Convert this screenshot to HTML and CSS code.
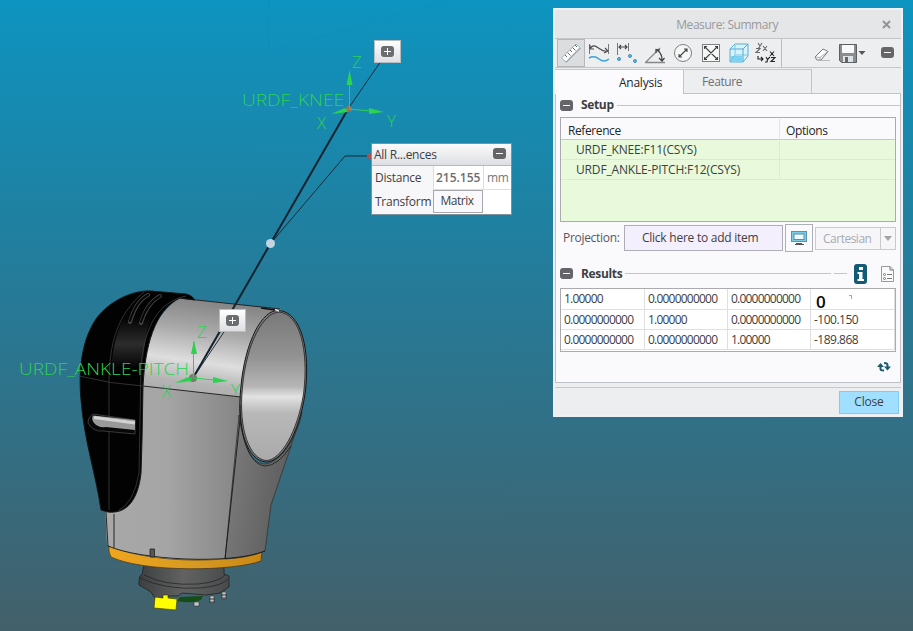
FILE: index.html
```html
<!DOCTYPE html>
<html lang="en">
<head>
<meta charset="utf-8">
<title>Measure: Summary</title>
<link rel="stylesheet" href="styles.css">
</head>
<body>
<main class="viewport">
<svg class="scene" width="913" height="631" viewBox="0 0 913 631">
  <defs>
    <linearGradient id="upper" gradientUnits="userSpaceOnUse" x1="200" y1="300" x2="186" y2="400"><stop offset="0" stop-color="#858585"/><stop offset=".3" stop-color="#a9a9a9"/><stop offset=".61" stop-color="#dedede"/><stop offset=".82" stop-color="#b4b4b4"/><stop offset="1" stop-color="#aaa"/></linearGradient>
    <linearGradient id="lower" x1="0" x2="1" y1="0" y2="0"><stop offset="0" stop-color="#a8a8a8"/><stop offset=".45" stop-color="#a5a5a5"/><stop offset="1" stop-color="#858585"/></linearGradient>
    <linearGradient id="side" x1="0" x2="1" y1="0" y2=".3"><stop offset="0" stop-color="#808080"/><stop offset="1" stop-color="#595959"/></linearGradient>
    <linearGradient id="hole" x1="0" x2="0" y1="0" y2="1"><stop offset="0" stop-color="#797979"/><stop offset=".3" stop-color="#929292"/><stop offset=".5" stop-color="#b5b5b5"/><stop offset=".57" stop-color="#e2e2e2"/><stop offset=".68" stop-color="#b8b8b8"/><stop offset="1" stop-color="#aaa"/></linearGradient>
    <linearGradient id="gold" x1="0" x2="1" y1="0" y2="0"><stop offset="0" stop-color="#f0a51d"/><stop offset=".55" stop-color="#d69a22"/><stop offset="1" stop-color="#ca8714"/></linearGradient>
    <linearGradient id="band" x1="0" x2="0" y1="0" y2="1"><stop offset="0" stop-color="#000"/><stop offset=".3" stop-color="#050505"/><stop offset=".6" stop-color="#2c2c2c"/><stop offset=".9" stop-color="#000"/></linearGradient>
    <linearGradient id="base" x1="0" x2="1" y1="0" y2="0"><stop offset="0" stop-color="#3d3f40"/><stop offset=".5" stop-color="#626262"/><stop offset="1" stop-color="#484a4b"/></linearGradient>
  </defs>
  <path d="M269 0V52M269 52L445 2" stroke="#0d84c0" stroke-width="1" fill="none" opacity=".2"/>

  <!-- mounting base -->
  <path d="M144 565L142 574Q139 576 139 581V585L151 592L156 600L165 596H178L182 593L206 595L220 593L229 587V576L224 574V564Z" fill="url(#base)" stroke="#222" stroke-width=".8"/>
  <path d="M144 575Q165 586 198 584Q220 582 226 574M140 578Q165 590 200 588Q222 586 228 579" stroke="#252627" stroke-width=".8" fill="none"/>
  <path d="M180 597L203 596L201 600Q190 604 177 601Z" fill="#164c16"/>
  <path d="M155 597L163 598V595H168V598L177 599L176 610L154 608Z" fill="#ff0" stroke="#464600" stroke-width=".7"/>
  <g stroke="#333" stroke-width=".6" fill="#c2cacd"><path d="M194 602h5v4h-5zM210 596h4v7h-4zM222 592h4v7h-4z"/></g>
  <path d="M209 599h6M209 602h6M221 595h6M221 598h6" stroke="#333" stroke-width="1"/>

  <!-- shell -->
  <path d="M109 545C140 562 230 566 262 550L261 561C235 571 145 573 111 557Q108 552 109 545Z" fill="url(#gold)" stroke="#463718" stroke-width=".7"/>
  <path d="M140 370L241 391L239 420L225 559C180 562 130 557 107 545L105 505Z" fill="url(#lower)"/>
  <path d="M239 415C244 450 253 465 266 464C284 460 298 434 302 412L290 449L271 505L265 551Q248 558 225 559Z" fill="url(#side)" stroke="#333" stroke-width=".8"/>
  <path d="M180 298L280 309L294 320L260 340L241 397L143 386L146 350Q154 315 180 298Z" fill="url(#upper)"/>
  <path d="M178 298L280 309M143 386L241 397M240 420L225 559M106 512L108 546C140 560 230 565 265 551M114 514V548" stroke="#181818" stroke-width=".9" fill="none"/>
  <path d="M279 310.500C301 312 311 350 305 394C299 434 282 462 266 462C248 461 236 430 241 386C245 342 262 309 279 310.500Z" fill="#777" stroke="#171717"/>
  <path d="M279 312C300 314 309 350 303.500 394C297.500 431 281 460.500 266 460.500C250 459 238 430 242.500 387C246.500 343 263 313 279 312Z" fill="url(#hole)" stroke="#222" stroke-width=".8"/>
  <path d="M240 405C240 436 249 465 265 466Q278 466 291 446" stroke="#1c1c1c" stroke-width=".8" fill="none"/>
  <path d="M261 308L275 310" stroke="#111" stroke-width="1.500"/><path d="M275 309.500l4 1.500" stroke="#ddd" stroke-width="1.500"/>
  <path d="M150 549h4.500v8h-4.500z" fill="#555" stroke="#222" stroke-width=".8"/>

  <!-- cover -->
  <path d="M101 510C96 475 84 440 81 400C77 357 87 330 99 315C114 298 136 290 151 291L186 294Q192 295 195 300L180 298C154 310 145 348 143 386L142 440L141 473C138 500 127 514 108 512Z" fill="#020202" stroke="#171717"/>
  <path d="M144 292L167 293C150 308 144 334 142 379L111 377C112 344 119 314 144 292Z" fill="url(#band)"/>
  <path d="M144 292C117 314 109 345 109 382V510M186 296C158 302 145 326 141 365L139 473Q134 503 118 511M79 376Q110 384 143 386" stroke="#3d3d3d" stroke-width=".8" fill="none"/>
  <path d="M130 322Q136 301 148 295M141 323Q147 303 160 296" stroke="#464646" stroke-width="4" stroke-linecap="round" fill="none"/><path d="M130 321Q136 301 148 295M141 322Q147 303 160 296" stroke="#080808" stroke-width="2.200" stroke-linecap="round" fill="none"/>
  <path d="M135 420L93 414Q88 417 88 423Q93 432 103 431L135 434Z" fill="#080808" stroke="#505050" stroke-width=".7"/>
  <path d="M135 420L93 415.500Q91 419 94 423Q98 428 106 427L135 430Z" fill="#999"/><path d="M94 417.500L135 423" stroke="#d2d2d2" stroke-width="3"/>

  <!-- measurement lines -->
  <g fill="none" stroke="#14222e"><path d="M348 109L193 378" stroke-width="2"/><path d="M348 109L381 61M271 243L345 156H371M193 378L226 329" stroke-width=".9"/></g>
  <circle cx="349" cy="109" r="3" fill="#9a7054"/><circle cx="370" cy="156" r="3" fill="#a45358"/>
  <circle cx="193" cy="378" r="4" fill="#71806a"/><circle cx="270.500" cy="243.500" r="4.500" fill="#c5d4e2"/>
  <g stroke="#2dd250" fill="#2dd250"><path d="M349.500 108V72M349 109L370 111M348 109L336 113M193.500 377V342M193 378L214 380M192 378L180 382"/><path stroke="none" d="M349.500 70L346.500 85H352.500ZM384 112L369 108V114ZM331 114L345 108L348 112ZM194 340L191 354H197ZM228 381L213 377V383ZM175 383L188 377L192 381Z"/></g>
  <g class="axis"><text x="242" y="106" textLength="102" lengthAdjust="spacingAndGlyphs">URDF_KNEE</text><text x="19" y="375" textLength="170" lengthAdjust="spacingAndGlyphs">URDF_ANKLE-PITCH</text><text x="352" y="68">Z</text><text x="317" y="129">X</text><text x="387" y="127">Y</text><text x="197" y="338">Z</text><text x="162" y="397">X</text><text x="231" y="396">Y</text></g>
</svg>

<button class="expander knee"><svg width="13" height="12"><rect width="13" height="11" rx="3" fill="#6b6c70"/><path d="M3 5.500h7M6.500 2v7" stroke="#fff"/></svg></button>
<button class="expander ankle"><svg width="13" height="12"><rect width="13" height="11" rx="3" fill="#6b6c70"/><path d="M3 5.500h7M6.500 2v7" stroke="#fff"/></svg></button>

<section class="callout">
  <header><span class="t-all">All R...ences</span><i class="minus"></i></header>
  <div class="measure"><span>Distance</span><b>215.155</b><em>mm</em></div>
  <div class="measure transform"><span>Transform</span><button>Matrix</button><em></em></div>
</section>

<section class="dialog">
  <header class="title"><span>Measure: Summary</span><svg width="9" height="9"><path d="M1 1L8 8M8 1L1 8" stroke="#939497" stroke-width="2"/></svg></header>
  <nav class="toolbar">
    <span class="tool active"><svg width="28" height="28"><path d="M4.500 19L19 5L23 8.500L9 23Z" fill="#fff" stroke="#a3b1b9"/><path d="M8 16l2 2M10.500 13.500l3 3M13 11l2 2M15.500 8.500l3 3M18 6l2 2" stroke="#547184"/><path d="M9 23.500L23.500 9" stroke="#7f8d95"/></svg></span>
    <span class="tool"><svg width="28" height="28"><path d="M4.500 5v10M23.500 5v10" stroke="#777"/><path d="M5 10C8 4 12 8 15 10Q19 13 23 12M5 10V6M5 10H9M23 12L20 9M23 12L19 14" fill="none" stroke="#4c4c4c" stroke-width="1.100"/><path d="M4 19Q9 16 14 20T24 20" fill="none" stroke="#3aa4da" stroke-width="1.600"/></svg></span>
    <span class="tool"><svg width="28" height="28"><path d="M4.500 4v12M15.500 4v8" stroke="#777"/><path d="M6 8h8M8 6L6 8L8 10M12 6L14 8L12 10" fill="none" stroke="#444" stroke-width="1.100"/><g fill="#64bce6" stroke="#3b90be"><circle cx="6" cy="20" r="1.500"/><circle cx="17" cy="17" r="1.500"/><circle cx="22" cy="22" r="1.500"/></g></svg></span>
    <span class="tool"><svg width="28" height="28"><path d="M4 23.500H24M5 23L19 9" stroke="#888" stroke-width="1.300"/><path d="M16 11Q21 14 21 21M15 14V10.500L19 11M18 19L21 22L23.500 19" fill="none" stroke="#444" stroke-width="1.200"/></svg></span>
    <span class="tool"><svg width="28" height="28"><circle cx="14" cy="14" r="8.500" fill="#f6f7f7" stroke="#808080"/><path d="M10 18L18 10M10 15v3h3M15 10h3v3" fill="none" stroke="#444" stroke-width="1.100"/></svg></span>
    <span class="tool"><svg width="28" height="28"><rect x="5.500" y="5.500" width="17" height="17" fill="#f6f7f7" stroke="#808080"/><path d="M7.500 7.500L20.500 20.500M20.500 7.500L7.500 20.500M7.500 10V7.500H10M18 7.500h2.500V10M7.500 18v2.500H10M18 20.500h2.500V18" fill="none" stroke="#444" stroke-width="1.100"/></svg></span>
    <span class="tool"><svg width="28" height="28"><path d="M5 10L10 5H23V17L18 23H5Z" fill="#d6f3ff" stroke="#5cadd0"/><path d="M5 10H18L23 5M18 10V23" fill="none" stroke="#55a9ce"/><path d="M5.500 17H17.500V22.500H5.500Z" fill="#7cd2f2"/><path d="M10 6V16H23M10 16L5 22" fill="none" stroke="#70b7d5" stroke-width=".8"/></svg></span>
    <span class="tool axes"><svg width="28" height="28"><g fill="none" stroke="#66686b" stroke-width="1.100"><path d="M5 4L7 7L9 4M7 7L6 9H5M3 9.500H7L3 13.500H7M10 7L14 12M14 7L10 12"/><path stroke="#222" d="M17 12.500L21 17M21 12.500L17 17M5 17V20H10M8 18L10 20L8 22M13 18L14.500 20.500L17 18M14.500 21L14 23H12M18 18.500H22L18 22.500H22"/></g></svg></span>
    <span class="divider"></span>
    <span class="tool eraser"><svg width="28" height="28"><path d="M7 18L15 10L20 12.500L13 21H9Z" fill="#fff" stroke="#77787b"/><path d="M7 18L12 18.500L20 12.500M12 18.500V21" fill="none" stroke="#999" stroke-width=".8"/><path d="M13 21.500H22" stroke="#bbb"/></svg></span>
    <span class="tool save"><svg width="28" height="28"><path d="M.500 5.500h17v18H2.500L.500 21.500Z" fill="#8a8d90" stroke="#5d6063"/><path d="M3 6h12v8H3Z" fill="#f7f8f8"/><path d="M4 17h10v6H4Z" fill="#dce4e8"/><path d="M6 18h3v5H6Z" fill="#666"/><path d="M19.500 12h7l-3.500 4Z" fill="#555"/></svg></span>
    <i class="minus"></i>
  </nav>
  <div class="tabs"><span class="selected">Analysis</span><span class="feature">Feature</span><i></i></div>
  <div class="panel">
    <h2 class="setup"><i class="minus"></i><span>Setup</span><hr><hr class="tail"></h2>
    <div class="references">
      <div class="row head"><span>Reference</span><span>Options</span></div>
      <div class="row"><span class="ref1">URDF_KNEE:F11(CSYS)</span><span></span></div>
      <div class="row"><span class="ref2">URDF_ANKLE-PITCH:F12(CSYS)</span><span></span></div>
    </div>
    <div class="projection"><label>Projection:</label><div class="collector"><span>Click here to add item</span></div><button class="screen"><svg width="18" height="16"><rect x="1.500" y="1.500" width="15" height="10" fill="#7bcbe6" stroke="#5495af"/><rect x="4" y="4" width="10" height="5.500" fill="#f2fbff" stroke="#4b94ad"/><path d="M6 13h6v1h2v1H5v-1h1Z" fill="#4e5860"/></svg></button><div class="select"><span>Cartesian</span><i></i></div></div>
    <h2 class="results"><i class="minus"></i><span>Results</span><hr><hr class="short"><b class="info"><svg width="13" height="20"><rect width="13" height="20" rx="3" fill="#135a74"/><path d="M5 3h4v3H5ZM3.500 8H8.500V15H10V17H3.500V15H5V10H3.500Z" fill="#fff"/></svg></b><svg class="report" width="13" height="16"><path d="M.5.500H9L12.500 4V15.500H.5Z" fill="#fafafa" stroke="#999"/><path d="M9 .5V4h3.500M6 8.500h5M6 12.500h5" fill="none" stroke="#777"/><circle cx="3.500" cy="8.500" r="1" fill="none" stroke="#777"/><circle cx="3.500" cy="12.500" r="1" fill="none" stroke="#777"/></svg></h2>
    <div class="matrix">
      <span>1.00000</span><span>0.0000000000</span><span>0.0000000000</span><span class="zero"><b>0</b><i></i></span>
      <span>0.0000000000</span><span>1.00000</span><span>0.0000000000</span><span>-100.150</span>
      <span>0.0000000000</span><span>0.0000000000</span><span>1.00000</span><span>-189.868</span>
    </div>
    <div class="refresh"><svg width="14" height="12"><path d="M3.500 4V8Q3.500 9.500 7 9.500M10.500 7V4Q10.500 2 7 2" fill="none" stroke="#1c5870" stroke-width="2"/><path d="M0 6L3.500 2L7 6ZM7 5.500H14L10.500 9.500Z" fill="#1c5870"/></svg></div>
  </div>
  <footer><button>Close</button></footer>
</section>
</main>
</body>
</html>
```
FILE: styles.css
```css
* { box-sizing: border-box; }
body { margin: 0; font: 12px/20px "Open Sans", "Noto Sans", sans-serif; color: #3e3e42; letter-spacing: -.25px; }
button { font: inherit; letter-spacing: inherit; color: inherit; padding: 0; }
svg { display: block; flex: none; }
span { white-space: nowrap; }
.viewport { position: relative; width: 913px; height: 631px; overflow: hidden; background: linear-gradient(#0d94c0, #247c9a 43%, #43606a); }
.scene { position: absolute; inset: 0; }
.axis { font: 300 17px "Open Sans", sans-serif; fill: #2dd250; letter-spacing: 0; }
.minus { display: block; flex: none; width: 13px; height: 11px; border-radius: 3px; background: linear-gradient(#fff, #fff) center / 7px 1px no-repeat #656569; }

.expander { position: absolute; width: 27px; height: 23px; border: 1px solid #b7bcc0; background: linear-gradient(#fff, #dedfe3); display: grid; place-items: center; }
.knee { left: 374px; top: 40px; }
.ankle { left: 219px; top: 309px; }
.callout { position: absolute; left: 371px; top: 143px; width: 141px; height: 72px; border: 1px solid #7e929b; background: #fff; }
.callout header { height: 22px; display: flex; justify-content: space-between; padding: 1px 5px 0 2px; background: linear-gradient(#fbfbfb, #dedfe3); border-bottom: 1px solid #b6b8bb; }
.callout .minus { margin-top: 3px; }
.measure { display: grid; grid-template-columns: 61px 51px 1fr; height: 24px; line-height: 24px; border-bottom: 1px solid #dedee2; }
.measure > span { padding-left: 3px; background: #f7f7fa; }
.measure b { border: solid #dedee2; border-width: 0 1px; padding-left: 2px; font-weight: 600; color: #6c6c70; letter-spacing: 0; }
.measure em { font-style: normal; padding-left: 3px; color: #77777b; }
.transform { border: 0; }
.transform button { height: 23px; width: 50px; border: 1px solid #a8a8ac; background: #f9f9fb; line-height: 20px; padding: 0 2px 1px 0; letter-spacing: -.5px; }

.dialog { position: absolute; left: 553px; top: 8px; width: 350px; height: 409px; border: 2px solid #eef2f6; background: #eceef0; display: flex; flex-direction: column; }
.title { height: 29px; display: flex; align-items: center; justify-content: flex-end; gap: 104px; padding: 0 10px 0 0; background: #e5e6e8; border-bottom: 1px solid #c4c5c9; color: #99999d; }
.title span { letter-spacing: -.45px; padding-top: 1px; }
.toolbar { height: 29px; display: flex; padding-left: 2px; border-bottom: 1px solid #c5c6ca; }
.tool { flex: 0 0 28px; height: 28px; }
.active { background: #dcdddf; border: 1px solid #b5b7ba; }
.active svg { margin: -1px; }
.divider { border-left: 1px solid #bbbcbf; }
.eraser { margin-left: 26px; }
.save { margin-left: 3px; }
.toolbar .minus { margin: 8px 0 0 14px; }
.tabs { height: 25px; display: flex; margin-top: 1px; line-height: 25px; }
.tabs span { border-top: 1px solid #c6c8cb; }
.selected { width: 128px; padding-left: 64px; background: #fbfbfd; color: #252529; }
.feature { width: 129px; padding-left: 18px; border: 1px solid #c3c4c8; color: #707074; letter-spacing: -.4px; }
.tabs .feature { line-height: 23px; }
.tabs i { flex: 1; border-bottom: 1px solid #c3c4c8; }
.panel { height: 289px; border: 1px solid #bfc2c7; border-top: 0; background: #fafafc; padding: 0 4px; }
h2 { display: flex; align-items: center; height: 23px; margin: 0; font-size: 12px; font-weight: 700; letter-spacing: -.35px; }
.setup { padding-bottom: 1px; }
h2 span { margin-left: 8px; }
hr { border: 0; height: 1px; background: #c4c5c9; flex: 1; margin: 0 0 0 3px; }
.setup .tail { flex: 0 0 57px; margin: 1px -4px 0 0; }
.references { height: 105px; border: 1px solid #aaabaf; background: #e8fadb; }
.row { display: grid; grid-template-columns: 218px 1fr; height: 20px; border-bottom: 1px solid #d8eadb; letter-spacing: -.16px; }
.row.head { height: 22px; padding-top: 1px; line-height: 23px; background: #fafafc; border-color: #c4c7cd; color: #252529; letter-spacing: -.4px; }
.row > span { padding-left: 15px; }
.head > span { padding-left: 7px; }
.row > span + span { padding-left: 6px; border-left: 1px solid #dce8e0; }
.projection { display: flex; align-items: center; height: 30px; margin-top: 1px; }
.projection label { width: 64px; padding-left: 3px; color: #59565f; letter-spacing: -.3px; }
.collector { width: 159px; height: 26px; border: 1px solid #aeaeb4; background: #f4effd; line-height: 24px; padding-left: 17px; }
.screen { width: 28px; height: 28px; margin-left: 2px; border: 1px solid #aeafb5; background: #fafafc; display: grid; place-items: center; }
.select { display: flex; width: 81px; height: 23px; margin-left: 2px; border: 1px solid #cacace; background: #f6f6f9; color: #aaaab0; line-height: 21px; letter-spacing: -.5px; }
.select span { flex: 1; padding-left: 7px; border-right: 1px solid #cacace; }
.select i { margin: 8px 3px; border: 4px solid transparent; border-top: 5px solid #a4a5a9; border-bottom: 0; width: 8px; height: 5px; }
.results { height: 35px; padding-top: 6px; }
.results .short { flex: 0 0 13px; }
.info { margin-left: 7px; }
.report { margin: 0 2px 0 14px; }
.matrix { height: 64px; border: 1px solid #aaaab0; background: #fff; display: grid; grid-template-columns: 84px 83px 83px 1fr; grid-template-rows: 21px 20px 20px; line-height: 20px; letter-spacing: -.78px; }
.matrix > span { padding-left: 3px; border: solid #dfdfe3; border-width: 0 1px 1px 0; }
.matrix > span:nth-child(4n) { letter-spacing: -.5px; }
.zero { display: flex; }
.zero b { font: 600 17px/25px "Open Sans", sans-serif; color: #080808; padding-left: 2px; }
.zero i { width: 3px; height: 4px; border: solid #aaa; border-width: 1px 1px 0 0; margin: 6px 0 0 24px; }
.refresh { display: flex; justify-content: flex-end; padding: 9px 5px 0; }
footer { margin-top: 4px; flex: 1; display: flex; justify-content: flex-end; border-top: 1px solid #c7c8cb; padding: 3px 2px 0; }
footer button { width: 60px; height: 23px; border: 1px solid #84cbe9; background: #a0dfff; letter-spacing: -.2px; padding-bottom: 1px; line-height: 20px; }
```
